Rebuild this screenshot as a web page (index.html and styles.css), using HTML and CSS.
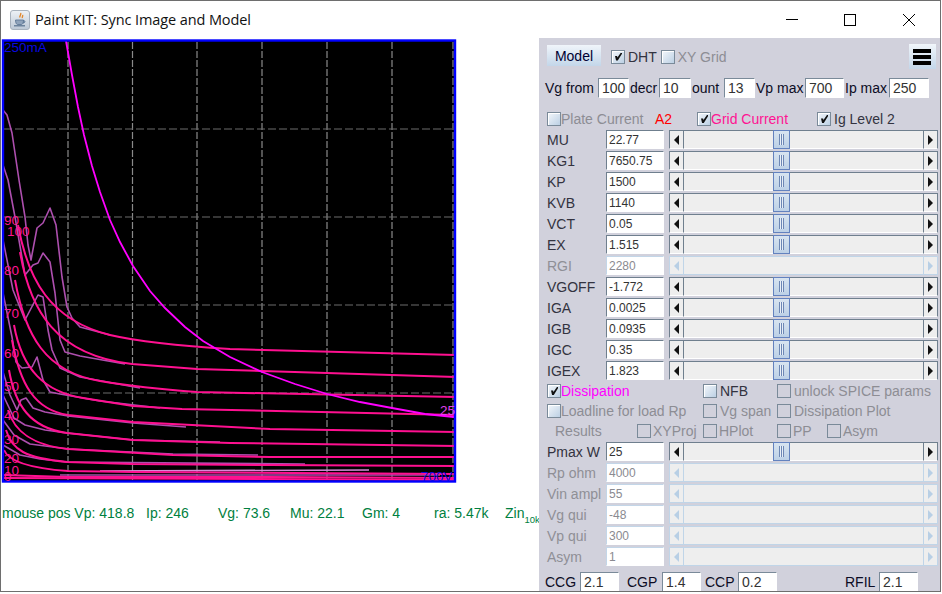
FILE: index.html
```html
<!DOCTYPE html>
<html lang="en">
<head>
<meta charset="utf-8">
<title>Paint KIT: Sync Image and Model</title>
<link rel="stylesheet" href="styles.css">
</head>
<body>
<div class="window">
  <header class="titlebar">
    <svg class="app-icon" viewBox="0 0 20 20" width="20" height="20">
      <defs><linearGradient id="ic" x1="0" y1="0" x2="0" y2="1"><stop offset="0" stop-color="#eef2f6"/><stop offset="1" stop-color="#bcc8d6"/></linearGradient></defs>
      <rect x="0.5" y="0.5" width="19" height="19" rx="2.5" fill="url(#ic)" stroke="#a8b2bd"/>
      <path d="M10.500 3c1.500 1.500-1.500 2.500-.5 4.500M12.500 5c.8 1-.8 1.800 0 3" fill="none" stroke="#e2872a" stroke-width="1.400"/>
      <path d="M5.500 10h8c0 3-1 4.300-2 4.500h-4c-1-.2-2-1.500-2-4.500zM13.500 10.500c2 0 2 2.500-.5 2.500" fill="#8fa3bb" stroke="#56708f" stroke-width=".8"/>
      <path d="M4 15.800h11" stroke="#56708f" stroke-width="1.200"/>
    </svg>
    <span class="title">Paint KIT: Sync Image and Model</span>
    <div class="controls">
      <svg viewBox="0 0 58 12" width="58" height="12"><path d="M23 5.500h12" stroke="#000" fill="none"/></svg>
      <svg viewBox="0 0 58 12" width="58" height="12"><rect x="23.500" y="0.500" width="11" height="11" stroke="#000" fill="none"/></svg>
      <svg viewBox="0 0 58 12" width="58" height="12"><path d="M23 0l12 12M35 0L23 12" stroke="#000" fill="none"/></svg>
    </div>
  </header>
  <main class="content">
    <section class="left">
      <svg class="plot" viewBox="1 38 457 446" width="457" height="446">
        <rect x="3" y="40.500" width="452" height="441" fill="#000"/>
        <g class="grid-v">
          <path d="M68 42V480M132.500 42V480M197 42V480M262 42V480M327 42V480M392 42V480M453 42V480"/>
        </g>
        <g class="grid-h">
          <path d="M4 129H454M4 217H454M4 305H454M4 393H454"/>
        </g>
        <g class="trace">
          <polyline points="3,110 7,115 12,133 19,180 25,217 28,245 31,260 37,228 43,223 50,208 56,225 62,277 67,307 72,318 80,327 110,335"/>
          <polyline points="3,165 8,180 15,217 25,275 33,265 38,263 43,253 50,262 55,293 60,340 65,352 80,356 125,364"/>
          <polyline points="3,240 13,290 25,320 38,295 43,297 48,330 52,350 60,368 80,377 140,388"/>
          <polyline points="3,293 12,337 16,362 22,368 32,367 37,357 43,380 50,392 60,394 100,401 160,408"/>
          <polyline points="3,372 10,395 17,410 21,400 26,398 33,408 45,412 68,416 133,423 186,427"/>
          <polyline points="3,395 14,418 25,425 45,430 67,433 133,440 220,442"/>
          <polyline points="3,420 14,435 30,444 68,449 173,454 258,455"/>
          <polyline points="3,445 20,455 40,459 67,462 305,464"/>
          <polyline class="light" points="100,471 369,470"/>
          <polyline points="60,475 440,475"/>
        </g>
        <g class="curve">
          <path d="M18 225C28 280 50 320 110 335C140 342 180 346 230 349L456 355"/>
          <path d="M20 252C30 310 55 355 132 364L197 369L456 377"/>
          <path d="M15 280C25 335 45 372 100 381C130 386 170 390 197 392L456 397"/>
          <path d="M14 325C22 370 45 392 83 398L133 406L182 409L456 415"/>
          <path d="M12 340C20 385 35 410 68 415L133 422L270 429L456 432"/>
          <path d="M9 370C15 405 30 428 67 433L133 440L230 443L456 446"/>
          <path d="M8 410C14 430 30 445 68 449L173 455L270 457L456 457"/>
          <path d="M6 430C12 450 25 458 67 462L133 464L270 465L456 466"/>
          <path d="M4 450C8 460 25 468 68 471L133 472L456 474"/>
          <path d="M3 475L68 477L270 477L456 478"/>
          <path d="M3 478L456 480"/>
        </g>
        <polyline class="load" points="66,41 72,75 78,107 84,135 92,166 100,192 110,220 120,242 133,266 150,291 165,308 185,327 203,341 230,357 262,372 295,384 327,394 360,402 392,408 425,414 454,417"/>
        <rect class="frame" x="3" y="40.500" width="452" height="441"/>
        <text class="lbl-blue" x="4" y="52">250mA</text>
        <text class="lbl-pink" x="4" y="225">90</text>
        <text class="lbl-pink" x="7" y="236">100</text>
        <text class="lbl-pink" x="4" y="275">80</text>
        <text class="lbl-pink" x="4" y="318">70</text>
        <text class="lbl-pink" x="4" y="358">60</text>
        <text class="lbl-pink" x="4" y="391">50</text>
        <text class="lbl-pink" x="4" y="420">40</text>
        <text class="lbl-pink" x="4" y="444">30</text>
        <text class="lbl-pink" x="4" y="463">20</text>
        <text class="lbl-pink" x="4" y="475">10</text>
        <text class="lbl-pink" x="4" y="481">0</text>
        <text class="lbl-load" x="440" y="415">25</text>
        <text class="lbl-blue" x="421" y="481">700V</text>
      </svg>
      <div class="status">
        <span class="wide">mouse pos Vp: 418.8</span>
        <span>Ip: 246</span>
        <span>Vg: 73.6</span>
        <span>Mu: 22.1</span>
        <span>Gm: 4</span>
        <span>ra: 5.47k</span>
        <span class="zin">Zin<sub>10k</sub></span>
      </div>
    </section>

    <aside class="panel">
      <div class="row-top">
        <button class="model">Model</button>
        <label class="chk dht"><i class="box on"></i>DHT</label>
        <label class="chk xy off"><i class="box bare-soft"></i>XY Grid</label>
        <button class="menu"><b></b><b></b><b></b></button>
      </div>

      <div class="row-range">
        <span class="w-vg">Vg from</span><span class="field w31">100</span>
        <span class="w-decr">decr</span><span class="field w32">10</span>
        <span class="w-ount">ount</span><span class="field w31">13</span>
        <span class="w-vp">Vp max</span><span class="field w39">700</span>
        <span class="w-ip">Ip max</span><span class="field w40">250</span>
      </div>

      <div class="row-modes">
        <label class="chk off"><i class="box"></i>Plate Current</label>
        <span class="red">A2</span>
        <label class="chk pink"><i class="box on"></i>Grid Current</label>
        <label class="chk lg"><i class="box on"></i>Ig Level 2</label>
      </div>

      <div class="param"><span>MU</span><span class="value">22.77</span><div class="slider"><i class="btn l"></i><i class="track"><em></em></i><i class="btn r"></i></div></div>
      <div class="param"><span>KG1</span><span class="value">7650.75</span><div class="slider"><i class="btn l"></i><i class="track"><em></em></i><i class="btn r"></i></div></div>
      <div class="param"><span>KP</span><span class="value">1500</span><div class="slider"><i class="btn l"></i><i class="track"><em></em></i><i class="btn r"></i></div></div>
      <div class="param"><span>KVB</span><span class="value">1140</span><div class="slider"><i class="btn l"></i><i class="track"><em></em></i><i class="btn r"></i></div></div>
      <div class="param"><span>VCT</span><span class="value">0.05</span><div class="slider"><i class="btn l"></i><i class="track"><em></em></i><i class="btn r"></i></div></div>
      <div class="param"><span>EX</span><span class="value">1.515</span><div class="slider"><i class="btn l"></i><i class="track"><em></em></i><i class="btn r"></i></div></div>
      <div class="param dis"><span>RGI</span><span class="value">2280</span><div class="slider"><i class="btn l"></i><i class="track"></i><i class="btn r"></i></div></div>
      <div class="param"><span>VGOFF</span><span class="value">-1.772</span><div class="slider"><i class="btn l"></i><i class="track"><em></em></i><i class="btn r"></i></div></div>
      <div class="param"><span>IGA</span><span class="value">0.0025</span><div class="slider"><i class="btn l"></i><i class="track"><em></em></i><i class="btn r"></i></div></div>
      <div class="param"><span>IGB</span><span class="value">0.0935</span><div class="slider"><i class="btn l"></i><i class="track"><em></em></i><i class="btn r"></i></div></div>
      <div class="param"><span>IGC</span><span class="value">0.35</span><div class="slider"><i class="btn l"></i><i class="track"><em></em></i><i class="btn r"></i></div></div>
      <div class="param"><span>IGEX</span><span class="value">1.823</span><div class="slider"><i class="btn l"></i><i class="track"><em></em></i><i class="btn r"></i></div></div>

      <div class="opts h20">
        <label class="chk magenta span2"><i class="box on"></i>Dissipation</label>
        <label class="chk lg"><i class="box"></i>NFB</label>
        <label class="chk off lg span2"><i class="box bare"></i>unlock SPICE params</label>
      </div>
      <div class="opts h20">
        <label class="chk off span2"><i class="box"></i>Loadline for load Rp</label>
        <label class="chk off lg"><i class="box bare"></i>Vg span</label>
        <label class="chk off lg span2"><i class="box bare"></i>Dissipation Plot</label>
      </div>
      <div class="opts h20">
        <span class="results">Results</span>
        <label class="chk off mid"><i class="box bare"></i>XYProj</label>
        <label class="chk off mid"><i class="box bare"></i>HPlot</label>
        <label class="chk off mid"><i class="box bare"></i>PP</label>
        <label class="chk off mid"><i class="box bare"></i>Asym</label>
      </div>

      <div class="param"><span>Pmax W</span><span class="value">25</span><div class="slider"><i class="btn l"></i><i class="track"><em></em></i><i class="btn r"></i></div></div>
      <div class="param dis"><span>Rp ohm</span><span class="value">4000</span><div class="slider"><i class="btn l"></i><i class="track"></i><i class="btn r"></i></div></div>
      <div class="param dis"><span>Vin ampl</span><span class="value">55</span><div class="slider"><i class="btn l"></i><i class="track"></i><i class="btn r"></i></div></div>
      <div class="param dis"><span>Vg qui</span><span class="value">-48</span><div class="slider"><i class="btn l"></i><i class="track"></i><i class="btn r"></i></div></div>
      <div class="param dis"><span>Vp qui</span><span class="value">300</span><div class="slider"><i class="btn l"></i><i class="track"></i><i class="btn r"></i></div></div>
      <div class="param dis"><span>Asym</span><span class="value">1</span><div class="slider"><i class="btn l"></i><i class="track"></i><i class="btn r"></i></div></div>

      <div class="row-caps">
        <span class="w-ccg">CCG</span><span class="field w39">2.1</span>
        <span class="w-cgp">CGP</span><span class="field w39">1.4</span>
        <span class="w-ccp">CCP</span><span class="field w39">0.2</span>
        <span class="w-rfil">RFIL</span><span class="field w39">2.1</span>
      </div>
    </aside>
  </main>
</div>
</body>
</html>
```

FILE: styles.css
```css
* { box-sizing: border-box; }
html, body { margin: 0; padding: 0; background: #fff; overflow: hidden; }
body { width: 942px; height: 594px; font-family: "Liberation Sans", Arial, sans-serif; }

.window {
  width: 941px;
  height: 592px;
  border: 1px solid #6e6e6e;
  display: flex;
  flex-direction: column;
  background: #fff;
  overflow: hidden;
}

.titlebar {
  height: 37px;
  flex: none;
  display: flex;
  align-items: center;
  padding-left: 9px;
  background: #fff;
}
.app-icon { flex: none; }
.title {
  margin-left: 5px;
  font-family: "Open Sans", "Noto Sans", sans-serif;
  font-size: 14.5px;
  letter-spacing: -0.1px;
  color: #111;
}
.controls { margin-left: auto; display: flex; padding-right: 2px; }
.controls svg { display: block; }
.controls svg:nth-child(2) { margin-right: 1px; }

.content { flex: 1; display: flex; min-height: 0; }

.left { width: 538px; flex: none; overflow: hidden; background: #fff; }
.plot { display: block; }
.grid-v path { stroke: #8a8a8a; stroke-width: 1.2; stroke-dasharray: 7 2; fill: none; }
.grid-h path { stroke: #6c6c6c; stroke-width: 1.2; stroke-dasharray: 8 3; fill: none; }
.trace polyline { fill: none; stroke: #ad4fae; stroke-width: 1.6; stroke-linejoin: round; }
.trace polyline.light { stroke: #d78ad8; }
.curve path { fill: none; stroke: #ff1090; stroke-width: 2; stroke-linejoin: round; }
.load { fill: none; stroke: #ff00ff; stroke-width: 1.8; }
.frame { fill: none; stroke: #0000ff; stroke-width: 2.4; }
.lbl-blue, .lbl-pink, .lbl-load { font-family: "Liberation Sans", Arial, sans-serif; font-size: 13.5px; }
.lbl-blue { fill: #0808e0; }
.lbl-pink { fill: #ff1493; }
.lbl-load { fill: #e040f0; }

.status {
  margin-top: 21px;
  height: 16px;
  padding-left: 1px;
  display: grid;
  grid-template-columns: 144px 72px 72px 72px 72px 71px 60px;
  font-size: 14px;
  line-height: 16px;
  color: #008040;
  white-space: nowrap;
}
.zin sub { font-size: 9.5px; line-height: 0; vertical-align: -5px; }

.panel {
  flex: 1;
  min-width: 0;
  background: #d1d1dc;
  padding-top: 6px;
  font-size: 14px;
  color: #333340;
  overflow: hidden;
}

.chk { display: inline-flex; align-items: center; white-space: nowrap; }
.box {
  width: 14px;
  height: 14px;
  flex: none;
  border: 1px solid #7a8a99;
  background: linear-gradient(135deg, #f4f7fb, #bcd0e4);
  box-shadow: inset 1px 1px 0 #fff;
  position: relative;
}
.box.on::after {
  content: "";
  position: absolute;
  left: 3px;
  top: 2px;
  width: 7px;
  height: 8px;
  background: #111;
  clip-path: polygon(0 45%, 30% 45%, 35% 62%, 85% 0, 100% 0, 100% 15%, 40% 100%, 15% 100%);
}
.box.bare { background: transparent; box-shadow: none; }
.box.bare-soft { background: linear-gradient(135deg, #f4f7fb, #bcd0e4); }
.off { color: #8d8d94; }
.pink { color: #ff1493; }
.magenta { color: #ff00ff; }
.red { color: #ff0000; }
.lg .box { margin-right: 3px; }
.mid .box { margin-right: 2px; }

.row-top {
  height: 25px;
  display: flex;
  align-items: center;
  padding: 0 4px 0 8px;
}
.model {
  width: 54px;
  height: 21px;
  padding: 0;
  margin-top: -2px;
  border: 0;
  font: 14px "Liberation Sans", Arial, sans-serif;
  color: #000033;
  background: linear-gradient(180deg, #f0f5fa, #c3d6e9);
}
.dht { margin-left: 10px; }
.dht .box, .xy .box { margin-right: 3px; }
.xy { margin-left: 4px; }
.menu {
  margin-left: auto;
  width: 27px;
  height: 25px;
  padding: 5px 4px 0;
  border: 0;
  background: linear-gradient(180deg, #f0f5fa, #c3d6e9);
  display: flex;
  flex-direction: column;
  gap: 2px;
}
.menu b { display: block; width: 18px; height: 4px; background: #000; }

.row-range, .row-caps {
  height: 20px;
  display: flex;
  align-items: center;
  padding-left: 6px;
  white-space: nowrap;
  color: #0c0c24;
}
.row-range { margin-top: 9px; }
.row-caps { margin-top: 5px; }
.field {
  height: 20px;
  flex: none;
  padding-left: 3px;
  background: #fff;
  border: 1px solid #fff;
  border-top-color: #7a8a99;
  border-left-color: #7a8a99;
  font-size: 14px;
  line-height: 19px;
  color: #333;
}
.w31 { width: 31px; }
.w32 { width: 32px; }
.w39 { width: 39px; }
.w40 { width: 40px; }
.w-vg { width: 53px; }
.w-decr { width: 30px; padding-left: 1px; }
.w-ount { width: 33px; padding-left: 1px; }
.w-vp { width: 50px; padding-left: 1px; }
.w-ip { width: 45px; padding-left: 1px; }
.w-ccg { width: 35px; }
.w-cgp { width: 43px; padding-left: 8px; }
.w-ccp { width: 37px; padding-left: 4px; }
.w-rfil { width: 102px; padding-left: 68px; }

.row-modes {
  height: 20px;
  margin-top: 11px;
  padding-left: 8px;
  display: grid;
  grid-template-columns: 108px 42px 120px 1fr;
  align-items: center;
}

.param {
  height: 21px;
  padding-left: 8px;
  display: grid;
  grid-template-columns: 59px 58px 274px;
  column-gap: 0;
  align-items: center;
}
.value {
  height: 19px;
  padding-left: 2px;
  background: #fff;
  border: 1px solid #fff;
  border-top-color: #6f7f8e;
  border-left-color: #6f7f8e;
  font-size: 12px;
  line-height: 19px;
  color: #333;
}
.slider {
  grid-column: 3;
  margin-left: 5px;
  width: 269px;
  height: 19px;
  display: flex;
}
.btn {
  width: 15px;
  flex: none;
  display: flex;
  align-items: center;
  justify-content: center;
  background: #eeeeee;
  border: 1px solid #fff;
  border-top-color: #6f7f8e;
  border-left-color: #6f7f8e;
  border-right-color: #6f7f8e;
}
.btn::after { content: ""; width: 0; height: 0; border-style: solid; border-color: transparent; border-width: 5px 0; }
.btn.l::after { border-right: 5px solid #111; }
.btn.r::after { border-left: 5px solid #111; }
.track {
  flex: 1;
  display: block;
  position: relative;
  background: #eeeeee;
  border-top: 1px solid #6f7f8e;
  border-bottom: 1px solid #fff;
}
.track em {
  position: absolute;
  left: 89px;
  top: -1px;
  width: 17px;
  height: 19px;
  border: 1px solid #6382bf;
  background:
    linear-gradient(90deg, transparent 5px, #6d87b5 5px, #6d87b5 6px, #e8eff7 6px, #e8eff7 7px, #6d87b5 7px, #6d87b5 8px, #e8eff7 8px, #e8eff7 9px, #6d87b5 9px, #6d87b5 10px, transparent 10px) center / 100% 11px no-repeat,
    linear-gradient(180deg, #d8e4f0, #bcd0e6);
}
.dis { color: #8f8f96; }
.dis .value { color: #8a8a90; border-color: #fff; border-top-color: #c3d6e8; border-left-color: #c3d6e8; }
.dis .btn { border-color: #c0d5e8; }
.dis .btn.l::after { border-right-color: #b8cfe5; }
.dis .btn.r::after { border-left-color: #b8cfe5; }
.dis .track { border-top-color: #c0d5e8; border-bottom-color: #c0d5e8; }

.opts {
  padding-left: 8px;
  display: grid;
  grid-template-columns: 90px 66px 74px 50px 1fr;
  align-items: center;
}
.h20 { height: 20px; }
.span2 { grid-column: span 2; }
.results { padding-left: 8px; color: #8d8d94; }
```
